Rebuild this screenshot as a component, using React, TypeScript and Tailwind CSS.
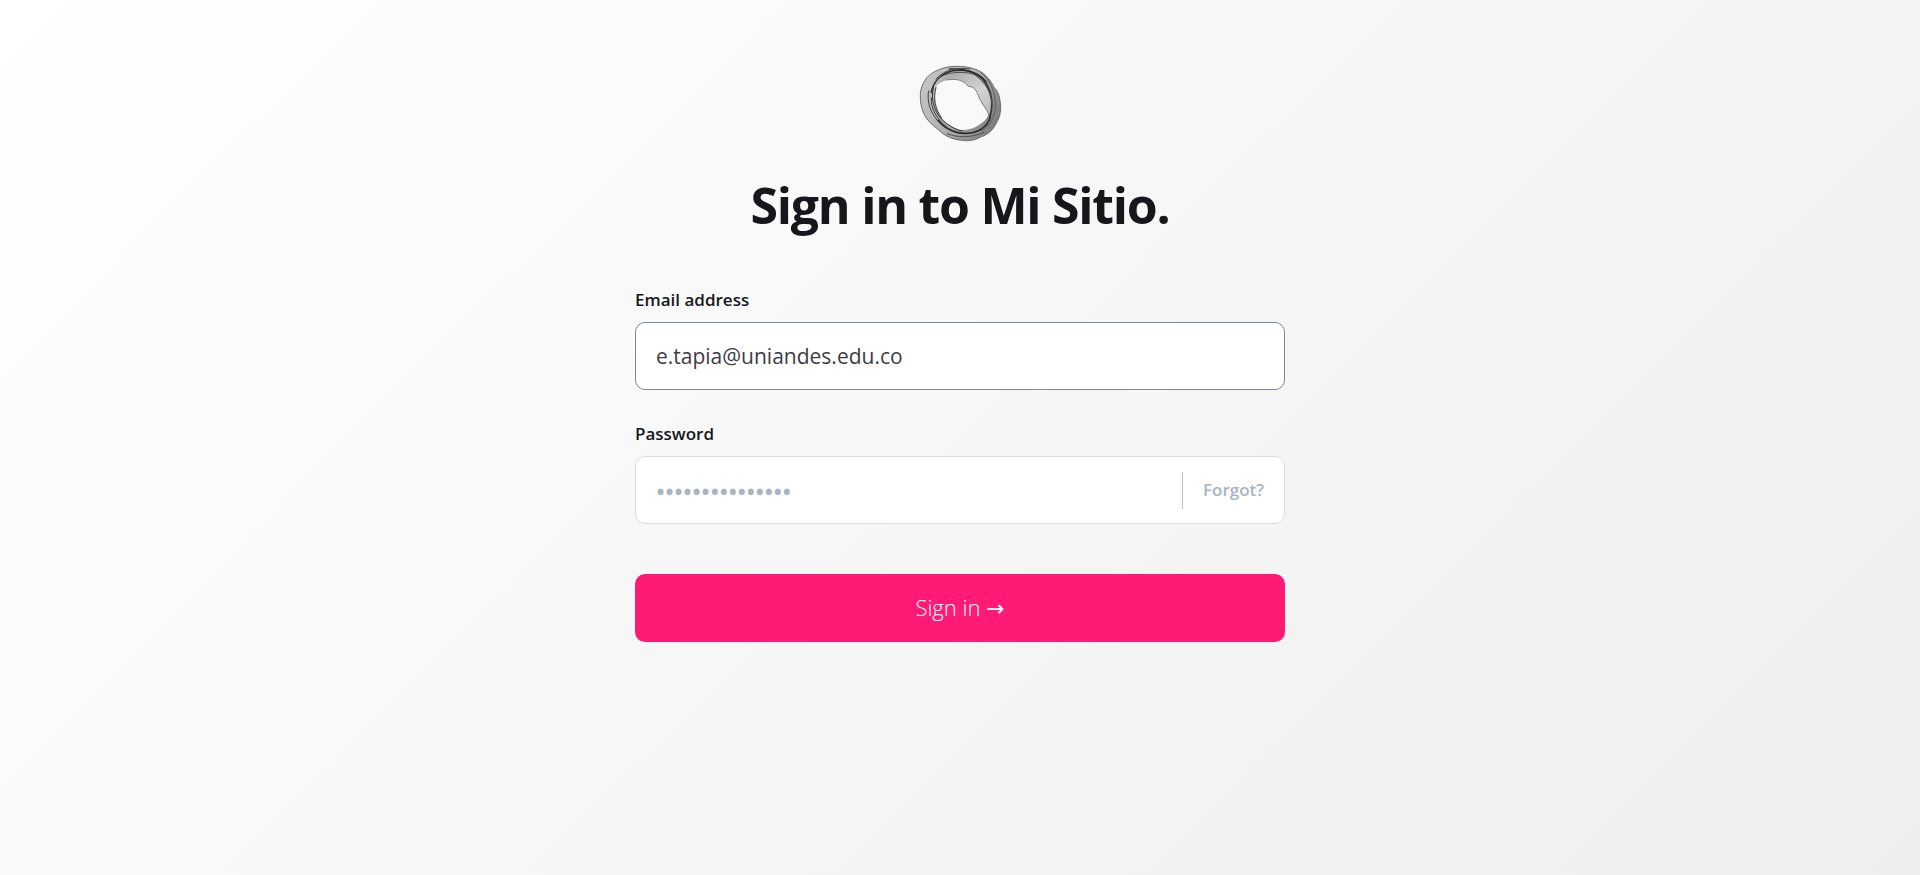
import { useState } from "react";

function Logo() {
  return (
    <svg viewBox="0 0 300 285" role="img" aria-label="Mi Sitio" className="h-[95px] w-[100px]">
      <defs>
        <linearGradient id="ring" x1="0" y1="0.2" x2="1" y2="0.7">
          <stop offset="0" stopColor="#c6c6c6" />
          <stop offset="0.5" stopColor="#b0b0b0" />
          <stop offset="1" stopColor="#7c7c7c" />
        </linearGradient>
        <linearGradient id="veil" x1="0" y1="0" x2="1" y2="1">
          <stop offset="0" stopColor="#a0a0a0" />
          <stop offset="0.6" stopColor="#d4d4d4" />
          <stop offset="1" stopColor="#b8b8b8" />
        </linearGradient>
      </defs>
      <path
        fill="url(#ring)"
        fillRule="evenodd"
        d="M31 115C35 85 50 62 74 50C94 39 115 34 138 34C162 34 182 37 202 45C226 55 243 77 252 97C264 108 268 122 270 138C275 162 271 185 259 204C250 224 234 239 212 246C195 256 175 259 155 256C132 254 112 246 95 233C80 218 62 208 51 192C36 172 30 145 31 115ZM78 95C86 85 98 78 112 75C135 70 160 74 174 94C190 92 202 108 208 130C217 148 230 160 236 178C230 192 222 201 210 208C192 222 166 228 146 224C126 218 110 206 98 192C82 176 70 138 78 95Z"
      />
      <path
        fill="url(#veil)"
        d="M82 88C100 58 150 46 190 60C220 74 240 104 245 140C247 160 244 172 236 178C232 168 222 155 214 146C208 124 202 98 174 94C160 70 130 72 112 75C98 76 88 82 82 88Z"
      />
      <g fill="none" strokeLinecap="round">
        <path stroke="#333333" strokeWidth="5" d="M64 112C70 78 95 55 130 47C170 40 210 54 230 88C246 116 250 150 240 186" />
        <path stroke="#2a2a2a" strokeWidth="4" d="M118 42C160 40 205 50 228 80" />
        <path stroke="#404040" strokeWidth="3" d="M56 108C48 150 70 192 104 216C138 240 182 242 214 224" />
        <path stroke="#333333" strokeWidth="3" d="M70 98C60 138 76 182 110 206C128 218 142 226 158 228" />
        <path stroke="#303030" strokeWidth="5" d="M84 196C112 232 168 246 208 226C226 216 236 204 241 186" />
        <path stroke="#3c3c3c" strokeWidth="3" d="M78 98C68 130 76 162 94 188M64 128C62 162 80 192 112 218" />
        <path stroke="#4c4c4c" strokeWidth="3" d="M78 72C100 46 136 36 180 42M88 68C116 50 160 48 192 58C226 80 246 116 246 150" />
        <path stroke="#5c5c5c" strokeWidth="3" d="M212 52C238 72 258 108 256 156C254 186 242 208 216 228" />
        <path stroke="#505050" strokeWidth="3" d="M112 236C140 248 184 250 222 232" />
        <path stroke="#606060" strokeWidth="2" d="M112 75C135 70 160 74 174 94C190 92 202 108 208 130C217 148 230 160 236 178" />
      </g>
      <path
        fill="none"
        stroke="#6c6c6c"
        strokeWidth="3"
        d="M31 115C35 85 50 62 74 50C94 39 115 34 138 34C162 34 182 37 202 45C226 55 243 77 252 97C264 108 268 122 270 138C275 162 271 185 259 204C250 224 234 239 212 246C195 256 175 259 155 256C132 254 112 246 95 233C80 218 62 208 51 192C36 172 30 145 31 115Z"
      />
    </svg>
  );
}

export default function App() {
  const [email, setEmail] = useState("e.tapia@uniandes.edu.co");
  const [password, setPassword] = useState("");

  return (
    <main className="min-h-screen bg-linear-135 from-white to-[#eeeeee] px-4 pt-[55px] pb-16 font-['Open_Sans','Noto_Sans',sans-serif] text-[#16171b]">
      <div className="mx-auto flex w-full max-w-[650px] flex-col">
        <header className="flex flex-col items-center">
          <Logo />
          <h1 className="mt-[23px] text-center text-[50px] leading-[64px] font-bold tracking-tight">Sign in to Mi Sitio.</h1>
        </header>
        <form className="mt-[51px] flex flex-col" onSubmit={(e) => e.preventDefault()}>
          <label htmlFor="email" className="text-[17px] leading-6 font-semibold">
            Email address
          </label>
          <input
            id="email"
            type="email"
            value={email}
            onChange={(e) => setEmail(e.target.value)}
            className="mt-[10px] h-[68px] w-full rounded-[10px] border border-[#7b8a9e] bg-white px-5 text-[21px] text-[#3c3c46] outline-none"
          />
          <label htmlFor="password" className="mt-8 text-[17px] leading-6 font-semibold">
            Password
          </label>
          <div className="mt-[10px] flex h-[68px] items-center rounded-[10px] border border-[#dddddd] bg-white">
            <input
              id="password"
              type="password"
              placeholder="•••••••••••••••"
              value={password}
              onChange={(e) => setPassword(e.target.value)}
              className="h-full min-w-0 flex-1 rounded-[10px] bg-transparent px-5 text-[24px] font-semibold outline-none placeholder:text-[#a9b4c4]"
            />
            <a href="#forgot" className="flex h-[37px] items-center border-l border-[#c4c4c4] px-5 text-[17px] font-semibold text-[#a9b4c4]">
              Forgot?
            </a>
          </div>
          <button type="submit" className="mt-[50px] h-[68px] rounded-[10px] bg-[#ff1a75] text-[22px] font-light text-white">
            Sign in <span className="font-['DejaVu_Sans',sans-serif] font-normal">→</span>
          </button>
        </form>
      </div>
    </main>
  );
}
